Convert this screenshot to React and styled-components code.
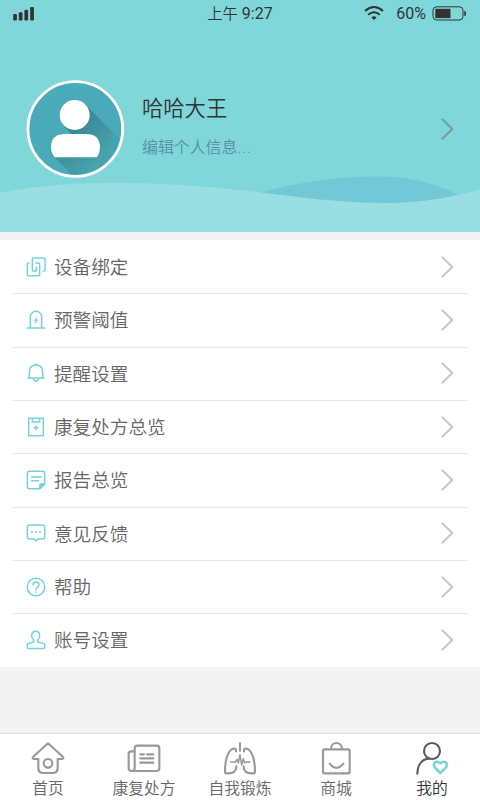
import React from 'react';
import styled, { createGlobalStyle } from 'styled-components';

const GlobalStyle = createGlobalStyle`
  * {
    box-sizing: border-box;
  }
  body {
    margin: 0;
    background: #f3f3f3;
    font-family: Roboto, 'Noto Sans CJK SC', sans-serif;
    font-weight: 350;
  }
`;

const Screen = styled.div`
  display: flex;
  flex-direction: column;
  width: 480px;
  height: 800px;
  overflow: hidden;
  background: #f3f3f3;
`;

const Header = styled.header`
  display: flex;
  flex-direction: column;
  height: 231.5px;
  background: #80d7d9;
`;

const StatusBar = styled.div`
  display: grid;
  grid-template-columns: 1fr auto 1fr;
  align-items: center;
  height: 28px;
  padding: 0 13px;
  color: #333;
  font-size: 16px;
  font-weight: 400;
  line-height: 28px;

  svg {
    display: block;
  }
`;

const Clock = styled.div`
  font-size: 16px;
  span {
    font-weight: 350;
    font-size: 15.3px;
  }
`;

const StatusRight = styled.div`
  display: flex;
  align-items: center;
  justify-content: flex-end;

  .wifi {
    margin-top: -2px;
    margin-right: 12px;
  }
  .battery {
    margin-left: 6px;
    margin-top: -2px;
  }
`;

const Profile = styled.div`
  display: flex;
  align-items: center;
  height: 98px;
  margin-top: 52px;
  padding: 0 26px;

  .avatar {
    flex: none;
  }
`;

const ProfileText = styled.div`
  flex: 1;
  margin-left: 17px;
`;

const Name = styled.div`
  color: #333;
  font-size: 21.3px;
  line-height: 32px;
  margin-top: -5px;
`;

const EditHint = styled.div`
  margin-top: 11px;
  color: #5192a6;
  font-size: 15.9px;
  line-height: 24px;

  span {
    letter-spacing: 0.9px;
  }
`;

const Waves = styled.svg`
  display: block;
  flex: none;
  margin-top: -2px;
`;

const Menu = styled.ul`
  list-style: none;
  margin: 8.5px 0 0;
  padding: 0 13px;
  background: #fff;
`;

const MenuItem = styled.li`
  display: flex;
  align-items: center;
  height: 53.33px;
  padding: 0 13px;
  box-shadow: ${props => (props.$last ? 'none' : '0 1px 0 #e6e6e6')};
  color: #666;
  font-size: 18.6px;

  span {
    flex: 1;
    margin-left: 8px;
    padding-bottom: 2px;
  }
`;

const LineIcon = styled.svg`
  flex: none;
  width: ${props => props.$size}px;
  height: ${props => props.$size}px;
  fill: none;
  stroke: ${props => props.$color};
  stroke-width: ${props => props.$stroke};
  stroke-linecap: round;
  stroke-linejoin: round;
`;

const TabBar = styled.nav`
  display: grid;
  grid-template-columns: repeat(5, 1fr);
  height: 67px;
  margin-top: auto;
  padding-top: 7px;
  border-top: 1px solid #dedede;
  background: #fff;
`;

const Tab = styled.div`
  display: flex;
  flex-direction: column;
  align-items: center;
  color: ${props => (props.$active ? '#333' : '#666')};
  font-size: 15.8px;
  line-height: 27px;
  white-space: nowrap;
`;

const Chevron = ({ color }) => (
  <svg width="14" height="24" viewBox="0 0 14 24" fill="none">
    <path
      d="M2.3 2.2 L12.3 12 L2.3 21.8"
      stroke={color}
      strokeWidth="2"
      strokeLinecap="round"
      strokeLinejoin="round"
    />
  </svg>
);

const Signal = () => (
  <svg width="22" height="14" viewBox="0 0 22 14" fill="#333">
    <rect x="0.2" y="7" width="3.7" height="6.5" rx="1.2" />
    <rect x="5.8" y="5.2" width="3.7" height="8.3" rx="1.2" />
    <rect x="11.4" y="2.8" width="3.7" height="10.7" rx="1.2" />
    <rect x="17.2" y="0" width="3.7" height="13.5" rx="1.2" />
  </svg>
);

const Wifi = () => (
  <svg className="wifi" width="20" height="14" viewBox="0 0 20 14" fill="none">
    <g stroke="#333" strokeWidth="1.9">
      <path d="M1 5 Q10 -2.8 19 5" />
      <path d="M4.2 8.7 Q10 3.6 15.8 8.7" />
    </g>
    <path d="M7.4 11.4 Q10 9.2 12.6 11.4 L10 14 Z" fill="#333" />
  </svg>
);

const Battery = () => (
  <svg className="battery" width="35" height="15" viewBox="0 0 35 15">
    <rect x="1" y="0.8" width="30" height="13.2" rx="3.6" fill="none" stroke="#333" />
    <rect x="3.3" y="2.8" width="15.2" height="9.3" fill="#333" />
    <path d="M32.3 4.6 Q34.2 5 34.2 7.4 Q34.2 9.8 32.3 10.2 Z" fill="#333" />
  </svg>
);

const Avatar = () => (
  <svg className="avatar" width="99" height="98" viewBox="0 0 297 294">
    <defs>
      <linearGradient id="shade" gradientUnits="userSpaceOnUse" x1="150" y1="130" x2="240" y2="220">
        <stop offset="0" stopColor="#3b8792" />
        <stop offset="1" stopColor="#46a3b0" />
      </linearGradient>
      <clipPath id="disc">
        <circle cx="148" cy="147" r="141" />
      </clipPath>
    </defs>
    <circle cx="148" cy="147" r="141" fill="#49aaba" />
    <path
      clipPath="url(#disc)"
      fill="url(#shade)"
      d="M177 73 L322 218 V320 H172 L86 232 H202 L113 137 Z"
    />
    <circle cx="146" cy="105" r="45" fill="#fff" />
    <path
      d="M86 232 Q75 219 75 202 Q75 162 118 162 H179 Q222 162 222 202 Q222 219 213 232 Z"
      fill="#fff"
    />
    <circle cx="148" cy="147" r="142" fill="none" stroke="#fff" strokeWidth="8.5" />
  </svg>
);

const menuItems = [
  {
    label: '设备绑定',
    icon: (
      <>
        <path d="M52 42h2q3 0 3-3V6q0-3-3-3H22q-3 0-3 3V39q0 3 3 3h9V31" />
        <path d="M30 18h8q3 0 3 3v32q0 3-3 3H7q-3 0-3-3V21q0-3 3-3h2" />
      </>
    )
  },
  {
    label: '预警阈值',
    icon: (
      <>
        <path d="M13 54V21a17 17 0 0 1 34 0V54M4 54H56" />
        <path d="M33 20L24 32H29L27 42L36 29H31Z" fill="#73d4d8" strokeWidth="1" />
      </>
    )
  },
  {
    label: '提醒设置',
    icon: (
      <path d="M6 45H54M10 45V25a20 20 0 0 1 40 0V45M28 4h4M23 46q0 9 7 9t7-9" />
    )
  },
  {
    label: '康复处方总览',
    icon: <path d="M8 4H52V56H8ZM19 4V15H41V4M30 26V38M24 32H36" />
  },
  {
    label: '报告总览',
    icon: (
      <>
        <path d="M42 56H10q-6 0-6-6V10q0-6 6-6H50q6 0 6 6V42L42 56V45q0-3 3-3H56" />
        <path d="M43 43H55L43 55Z" fill="#73d4d8" />
        <path d="M17 21H45M17 32H38" />
      </>
    )
  },
  {
    label: '意见反馈',
    icon: (
      <>
        <path d="M10 6H50q6 0 6 6V42q0 6-6 6H36L30 53L24 48H10q-6 0-6-6V12q0-6 6-6Z" />
        <path d="M18 27h.1M30 27h.1M42 27h.1" strokeWidth="6" />
      </>
    )
  },
  {
    label: '帮助',
    icon: (
      <>
        <circle cx="30" cy="30" r="26.5" />
        <path d="M21 24q0-9 9-9t9 8q0 5-5 8-4 2-4 7M30 45v.5" />
      </>
    )
  },
  {
    label: '账号设置',
    icon: (
      <path d="M23 36V30Q17 25 17 17Q17 4 29 4Q41 4 41 17Q41 25 35 30V36Q46 38 52 40Q56 41 56 45V52Q56 55.5 52 55.5H8Q4 55.5 4 52V45Q4 41 8 40Q14 38 23 36Z" />
    )
  }
];

const tabs = [
  {
    label: '首页',
    icon: (
      <>
        <path d="M51 7L96 48q3 5-3 6H80V80q0 16-16 16H38q-16 0-16-16V54H9q-6-1-3-6Z" />
        <circle cx="51" cy="67" r="13" />
      </>
    )
  },
  {
    label: '康复处方',
    icon: (
      <>
        <path d="M31 14H89q8 0 8 8V82q0 8-8 8H13q-8 0-8-8V39q0-8 8-8H23V22q0-8 8-8Z" />
        <path d="M23 31V82q0 7-7 8" />
        <path d="M40 40H51M60 40H79M40 52H79M40 65H79" />
      </>
    )
  },
  {
    label: '自我锻炼',
    icon: (
      <>
        <path d="M51 7V29" strokeWidth="6" />
        <path d="M39 31Q40 20 30 23C14 28 6 60 6 92Q6 97 12 97Q41 99 40 76" />
        <path d="M63 31Q62 20 72 23C88 28 96 60 96 92Q96 97 90 97Q61 99 62 76" />
        <path d="M23 63H37L42 55L46 66L51 41L56 72L61 53L65 66L69 63H81" strokeWidth="4.5" />
      </>
    )
  },
  {
    label: '商城',
    icon: (
      <>
        <path d="M17 25H87q5 0 5 5V92q0 5-5 5H17q-5 0-5-5V30q0-5 5-5Z" />
        <path d="M36 24C36 0 69 0 69 24M32 68Q52 93 73 68" />
      </>
    )
  },
  {
    label: '我的',
    active: true,
    icon: (
      <>
        <circle cx="51" cy="30" r="24" />
        <path d="M7 98C8 72 20 54 43 53" />
        <path
          d="M76 96L60 80C53 71 58 62 66 62Q72 62 76 67Q80 62 86 62C95 62 99 72 92 80Z"
          stroke="#73d4d8"
          strokeWidth="7.5"
        />
      </>
    )
  }
];

const App = () => (
  <>
    <GlobalStyle />
    <Screen>
      <Header>
        <StatusBar>
          <Signal />
          <Clock>
            <span>上午</span> 9:27
          </Clock>
          <StatusRight>
            <Wifi />
            60%
            <Battery />
          </StatusRight>
        </StatusBar>
        <Profile>
          <Avatar />
          <ProfileText>
            <Name>哈哈大王</Name>
            <EditHint>
              编辑个人信息<span>...</span>
            </EditHint>
          </ProfileText>
          <Chevron color="#729da0" />
        </Profile>
        <Waves width="480" height="55.5" viewBox="0 0 480 55.5">
          <path d="M262 16C300 6 340 .5 375 .5C412 .5 438 8 460 20V30H262Z" fill="#72c8d4" />
          <path
            d="M0 17C40 9 80 7 115 7C237 7 302 27 385 27C425 27 455 20 480 13.5V56H0Z"
            fill="#99dfe1"
          />
        </Waves>
      </Header>
      <Menu>
        {menuItems.map((item, i) => (
          <MenuItem key={item.label} $last={i === menuItems.length - 1}>
            <LineIcon viewBox="0 0 60 60" $size={20} $stroke={4.4} $color="#73d4d8">
              {item.icon}
            </LineIcon>
            <span>{item.label}</span>
            <Chevron color="#c8c8c8" />
          </MenuItem>
        ))}
      </Menu>
      <TabBar>
        {tabs.map(tab => (
          <Tab key={tab.label} $active={tab.active}>
            <LineIcon
              viewBox="0 0 102 102"
              $size={34}
              $stroke={6.4}
              $color={tab.active ? '#5c5c5c' : '#999'}
            >
              {tab.icon}
            </LineIcon>
            {tab.label}
          </Tab>
        ))}
      </TabBar>
    </Screen>
  </>
);

export default App;
